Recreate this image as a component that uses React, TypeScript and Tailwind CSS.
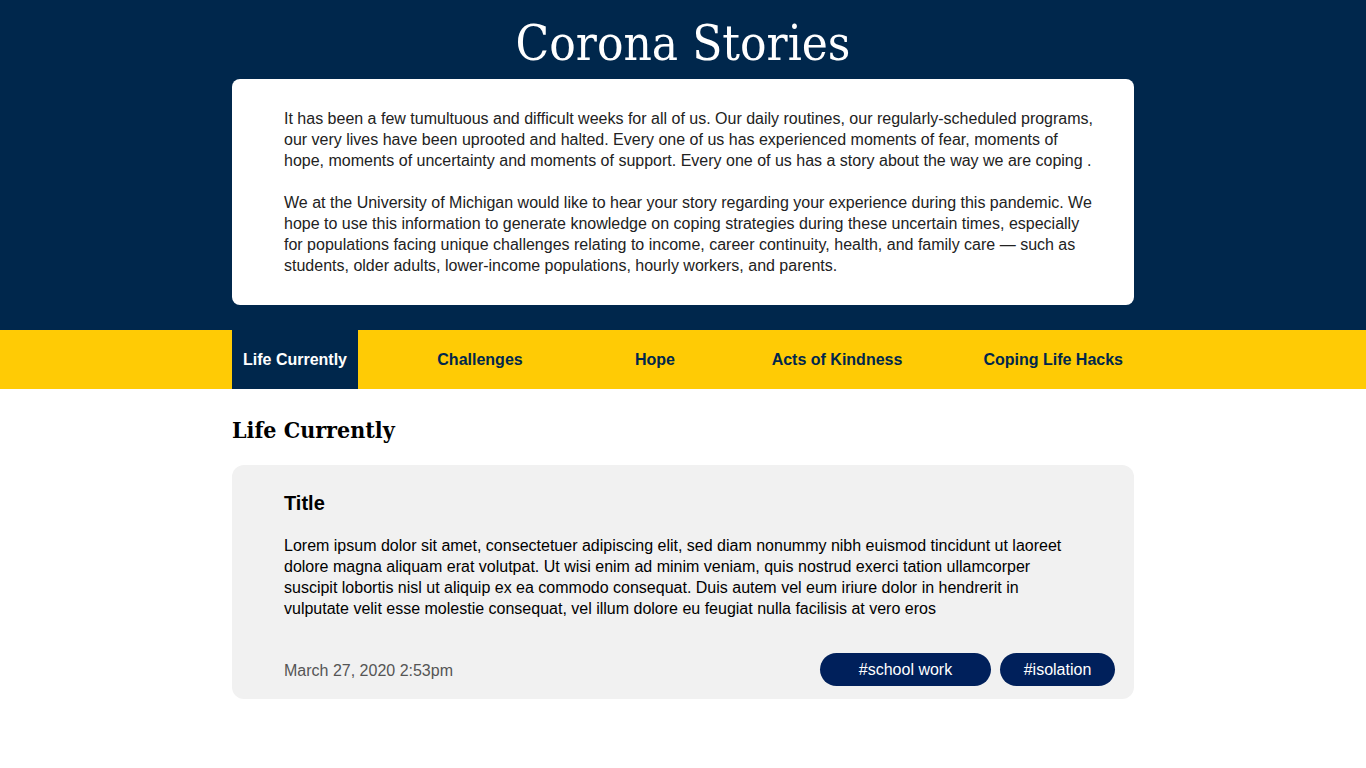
import { FC, JSX } from 'react';

const tabs = [
  { label: 'Life Currently', cls: 'w-[126px] justify-center bg-[#00274c] text-white' },
  { label: 'Challenges', cls: 'w-[244px] justify-center text-[#00274c]' },
  { label: 'Hope', cls: 'w-[106px] justify-center text-[#00274c]' },
  { label: 'Acts of Kindness', cls: 'w-[258px] justify-center text-[#00274c]' },
  { label: 'Coping Life Hacks', cls: 'flex-1 justify-end pr-[11px] text-[#00274c]' },
];

const App: FC = (): JSX.Element => {
  return (
    <div className="min-h-screen bg-white font-['Liberation_Sans',Arial,sans-serif]">
      {/* header */}
      <header className="bg-[#00274c] pb-[25px]">
        <h1 className="pt-[14px] h-[79px] text-center text-white text-[49px] leading-[60px] font-['DejaVu_Serif',serif] [font-stretch:condensed]">
          Corona Stories
        </h1>
        <div className="mx-auto w-[902px] bg-white rounded-[8px] pl-[52px] pr-[36px] pt-[29px] pb-[29px] text-[16px] leading-[21px] text-[#222]">
          <p>
            It has been a few tumultuous and difficult weeks for all of us. Our daily routines, our regularly-scheduled programs,
            our very lives have been uprooted and halted. Every one of us has experienced moments of fear, moments of
            hope, moments of uncertainty and moments of support. Every one of us has a story about the way we are coping .
          </p>
          <p className="mt-[21px]">
            We at the University of Michigan would like to hear your story regarding your experience during this pandemic. We
            hope to use this information to generate knowledge on coping strategies during these uncertain times, especially
            for populations facing unique challenges relating to income, career continuity, health, and family care — such as
            students, older adults, lower-income populations, hourly workers, and parents.
          </p>
        </div>
      </header>

      {/* nav */}
      <nav className="bg-[#ffcb05]">
        <ul className="mx-auto w-[902px] flex h-[59px]">
          {tabs.map((t) => (
            <li key={t.label} className={`flex items-center font-bold text-[16px] ${t.cls}`}>
              {t.label}
            </li>
          ))}
        </ul>
      </nav>

      {/* stories */}
      <main className="mx-auto w-[902px] pt-[26px]">
        <h2 className="text-[23px] leading-[30px] text-black font-bold font-['DejaVu_Serif',serif] [font-stretch:condensed]">
          Life Currently
        </h2>
        <article className="mt-[20px] bg-[#f1f1f1] rounded-[12px] pl-[52px] pr-[19px] pt-[24px] pb-[13px]">
          <h3 className="text-[20px] leading-[28px] font-bold text-black">Title</h3>
          <p className="mt-[18px] pr-[33px] text-[16px] leading-[21px] text-black">
            Lorem ipsum dolor sit amet, consectetuer adipiscing elit, sed diam nonummy nibh euismod tincidunt ut laoreet
            dolore magna aliquam erat volutpat. Ut wisi enim ad minim veniam, quis nostrud exerci tation ullamcorper
            suscipit lobortis nisl ut aliquip ex ea commodo consequat. Duis autem vel eum iriure dolor in hendrerit in
            vulputate velit esse molestie consequat, vel illum dolore eu feugiat nulla facilisis at vero eros
          </p>
          <div className="mt-[34px] flex items-center justify-between">
            <span className="text-[16px] text-[#555] pt-[2px]">March 27, 2020 2:53pm</span>
            <div className="flex gap-[9px]">
              <span className="w-[171px] h-[33px] flex items-center justify-center rounded-full bg-[#00205b] text-white text-[16px]">
                #school work
              </span>
              <span className="w-[115px] h-[33px] flex items-center justify-center rounded-full bg-[#00205b] text-white text-[16px]">
                #isolation
              </span>
            </div>
          </div>
        </article>
      </main>
    </div>
  );
};

export default App;
